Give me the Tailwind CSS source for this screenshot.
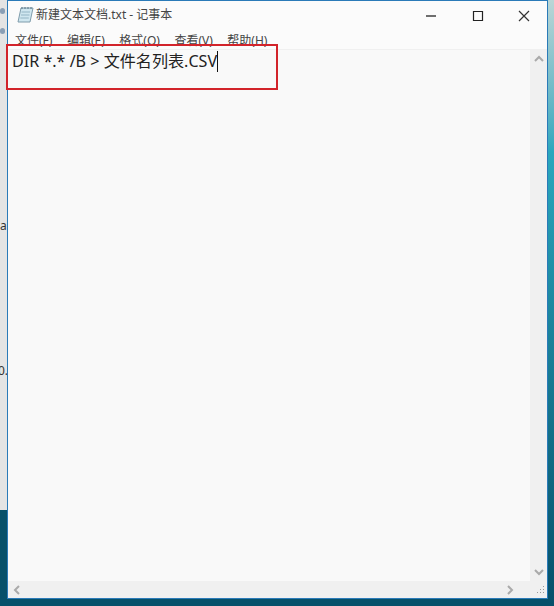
<!DOCTYPE html>
<html lang="zh-CN">
<head>
    <meta charset="UTF-8">
    <title>新建文本文档.txt - 记事本</title>
    <script src="https://cdn.jsdelivr.net/npm/@tailwindcss/browser@4"></script>
</head>
<body class="relative w-[554px] h-[606px] overflow-hidden flex bg-[#06506a] font-['Noto_Sans','Noto_Sans_CJK_SC',sans-serif]">

    <!-- desktop left of the window -->
    <div class="w-[7px] h-full shrink-0 flex flex-col">
        <div class="h-[510px] bg-[#e4e4e4] text-[12px] leading-none text-[#333] overflow-hidden flex flex-col">
            <div class="h-[34px] shrink-0 flex flex-col gap-[14px] pt-[8px]">
                <div class="w-[5px] h-[7px] rounded-full bg-[#8a9fb5]"></div>
                <div class="w-[5px] h-[7px] rounded-full bg-[#8a9fb5]"></div>
            </div>
            <div class="h-[186px] shrink-0"></div>
            <div class="h-[145px] shrink-0">a</div>
            <div class="-ml-[2px]">0.</div>
        </div>
        <div class="flex-1 bg-[#06506a]"></div>
    </div>

    <!-- notepad window -->
    <div class="w-[541px] h-[599px] shrink-0 flex flex-col bg-[#f9f9f9] border border-[#2a7ab8]">
        <div class="h-[28px] shrink-0 flex items-center bg-[#fbfbfb] pl-[9px]">
            <svg class="w-[17px] h-[18px] mr-[2px]" viewBox="0 0 17 18">
                <path d="M4 2h12l-3 14H1z" fill="#cfe6ef" stroke="#7f9cab"/>
                <path d="M4.500 6h8.500M4 9h8.500M3.300 12h8.500" stroke="#93b4c4"/>
                <path d="M5 1v2M8 1v2M11 1v2M14 1v2" stroke="#5a7688"/>
            </svg>
            <span class="text-[12px] text-[#444]">新建文本文档.txt - 记事本</span>
            <div class="ml-auto flex items-center h-full text-[#222]">
                <svg class="w-[46px] h-[28px]" viewBox="0 0 46 28"><path d="M17 15h10" stroke="#111" stroke-width="1.2"/></svg>
                <svg class="w-[46px] h-[28px]" viewBox="0 0 46 28"><path d="M18.500 10.500h9v9h-9z" fill="none" stroke="#222" stroke-width="1.200"/></svg>
                <svg class="w-[46px] h-[28px]" viewBox="0 0 46 28"><path d="M18 10l10 10M28 10L18 20" stroke="#333" stroke-width="1.200"/></svg>
            </div>
        </div>
        <div class="h-[21px] shrink-0 flex items-center gap-[14.500px] bg-[#fbfbfb] pl-[7px] pt-[3px] text-[12px] text-[#444] border-b border-[#f0f0f0]">
            <span>文件(F)</span>
            <span>编辑(E)</span>
            <span>格式(O)</span>
            <span>查看(V)</span>
            <span>帮助(H)</span>
        </div>
        <div class="flex-1 min-h-0 flex">
            <div class="flex-1 pl-[4px] h-full">
                <div class="flex items-center h-[22px] text-[16.100px] text-[#222] leading-none">
                    <span>DIR *.* /B &gt; 文件名列表.CSV</span>
                    <span class="w-px h-[21px] bg-[#111]"></span>
                </div>
            </div>
            <div class="w-[17px] h-full bg-[#f0f0f0] flex flex-col items-center justify-between py-[5px]">
                <svg class="w-[10px] h-[7px]" viewBox="0 0 10 7"><path d="M1 6l4-4 4 4" fill="none" stroke="#aaa" stroke-width="2"/></svg>
                <svg class="w-[10px] h-[7px]" viewBox="0 0 10 7"><path d="M1 1l4 4 4-4" fill="none" stroke="#aaa" stroke-width="2"/></svg>
            </div>
        </div>
        <div class="h-[17px] shrink-0 flex items-center bg-[#f0f0f0] pl-[5px]">
            <svg class="w-[7px] h-[10px]" viewBox="0 0 7 10"><path d="M6 1L2 5l4 4" fill="none" stroke="#aaa" stroke-width="2"/></svg>
            <svg class="ml-auto mr-[21px] w-[7px] h-[10px]" viewBox="0 0 7 10"><path d="M1 1l4 4-4 4" fill="none" stroke="#aaa" stroke-width="2"/></svg>
            <svg class="w-[10px] h-[10px] mr-[2px]" viewBox="0 0 10 10"><path d="M8 1h1v1H8zM5 4h1v1H5zM8 4h1v1H8zM2 7h1v1H2zM5 7h1v1H5zM8 7h1v1H8z" fill="#999"/></svg>
        </div>
    </div>

    <!-- desktop right of the window -->
    <div class="flex-1 h-full bg-gradient-to-b from-[#b9d6d6] via-[#2aa7bd] via-[25%] to-[#06506a]"></div>

    <!-- red annotation box -->
    <div class="absolute left-[6px] top-[44px] w-[272px] h-[46px] border-2 border-[#d2232a]"></div>

</body>
</html>
